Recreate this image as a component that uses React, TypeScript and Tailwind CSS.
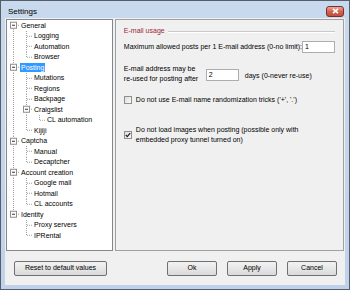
import React from "react";

type Cell = "v" | "e" | "t" | "l" | "bf" | "bm" | "bl";

const rows: { label: string; cells: Cell[]; sel?: boolean }[] = [
  { label: "General", cells: ["bf"] },
  { label: "Logging", cells: ["v", "t"] },
  { label: "Automation", cells: ["v", "t"] },
  { label: "Browser", cells: ["v", "l"] },
  { label: "Posting", cells: ["bm"], sel: true },
  { label: "Mutations", cells: ["v", "t"] },
  { label: "Regions", cells: ["v", "t"] },
  { label: "Backpage", cells: ["v", "t"] },
  { label: "Craigslist", cells: ["v", "bm"] },
  { label: "CL automation", cells: ["v", "v", "l"] },
  { label: "Kijiji", cells: ["v", "l"] },
  { label: "Captcha", cells: ["bm"] },
  { label: "Manual", cells: ["v", "t"] },
  { label: "Decaptcher", cells: ["v", "l"] },
  { label: "Account creation", cells: ["bm"] },
  { label: "Google mail", cells: ["v", "t"] },
  { label: "Hotmail", cells: ["v", "t"] },
  { label: "CL accounts", cells: ["v", "l"] },
  { label: "Identity", cells: ["bl"] },
  { label: "Proxy servers", cells: ["e", "t"] },
  { label: "IPRental", cells: ["e", "l"] },
];

const LC = "#a0a0a0";

function TreeCell({ type }: { type: Cell }) {
  const h = 10.5;
  const cy = 5.25;
  const dash = "1 1";
  return (
    <svg width={13} height={h} viewBox={`0 0 13 ${h}`} className="shrink-0 block">
      {(type === "v" || type === "t" || type === "bm") && (
        <line x1={6.5} y1={0} x2={6.5} y2={h} stroke={LC} strokeDasharray={dash} />
      )}
      {(type === "l" || type === "bl") && (
        <line x1={6.5} y1={0} x2={6.5} y2={cy} stroke={LC} strokeDasharray={dash} />
      )}
      {type === "bf" && (
        <line x1={6.5} y1={cy} x2={6.5} y2={h} stroke={LC} strokeDasharray={dash} />
      )}
      {type !== "v" && type !== "e" && (
        <line x1={7} y1={cy} x2={13} y2={cy} stroke={LC} strokeDasharray={dash} />
      )}
      {(type === "bf" || type === "bm" || type === "bl") && (
        <g>
          <rect x={3.5} y={2.25} width={6} height={6} fill="#fff" stroke="#8e8f8f" />
          <line x1={5} y1={5.25} x2={8} y2={5.25} stroke="#333" />
        </g>
      )}
    </svg>
  );
}

function Checkbox({ checked }: { checked?: boolean }) {
  return (
    <div className="w-[8px] h-[8px] shrink-0 border border-[#8f8f8f] bg-gradient-to-br from-[#dcdcdc] to-[#fbfbfb] flex items-center justify-center">
      {checked && (
        <svg width="6" height="6" viewBox="0 0 6 6">
          <path d="M0.8 3 L2.3 4.6 L5.2 1.2" stroke="#222" strokeWidth="1.3" fill="none" />
        </svg>
      )}
    </div>
  );
}

function Btn({ label, w }: { label: string; w: string }) {
  return (
    <div
      className={`${w} h-[15px] border border-[#707070] rounded-[2px] bg-gradient-to-b from-[#f3f3f3] to-[#dadada] flex items-center justify-center text-[7px] text-black`}
    >
      {label}
    </div>
  );
}

export default function App() {
  return (
    <div
      className="w-[350px] h-[290px] bg-gradient-to-b from-[#c9d9ed] to-[#bfd2ea] border border-[#555e6a] flex flex-col text-black"
      style={{ fontFamily: '"Liberation Sans", Arial, sans-serif' }}
    >
      {/* title bar */}
      <div className="h-[17px] flex items-center justify-between pl-[7px] pr-[5px] shrink-0">
        <span className="text-[8px] leading-none mt-[4px]">Settings</span>
        <div className="w-[18px] h-[11px] mt-[3px] rounded-[3px] border border-[#7a3028] bg-gradient-to-b from-[#e9a99c] via-[#d0624f] to-[#c2503b] flex items-center justify-center">
          <svg width="7" height="6" viewBox="0 0 7 6">
            <path d="M1 0.8 L6 5.2 M6 0.8 L1 5.2" stroke="#fff" strokeWidth="1.6" />
          </svg>
        </div>
      </div>
      {/* client */}
      <div className="flex-1 mx-[4px] mb-[4px] bg-[#f0f0f0] flex flex-col">
        <div className="flex h-[233px] pt-[1px]">
          {/* tree */}
          <div className="w-[109px] ml-[1px] border border-[#828790] bg-white pt-0 flex flex-col">
            {rows.map((r) => (
              <div key={r.label} className="h-[10.5px] flex items-center pl-0">
                {r.cells.map((c, i) => (
                  <TreeCell key={i} type={c} />
                ))}
                <span
                  className={`text-[7px] leading-[9px] px-[1px] whitespace-nowrap ${
                    r.sel ? "bg-[#3399ff] text-white" : ""
                  }`}
                >
                  {r.label}
                </span>
              </div>
            ))}
          </div>
          {/* right panel */}
          <div className="ml-[2px] mr-[1px] flex-1 border border-[#a0a0a0] flex flex-col pl-[8px] pr-[8px] text-[7px] leading-[10px]">
            <div className="flex items-center mt-[6px]">
              <span className="text-[#9c1f34] whitespace-nowrap">E-mail usage</span>
              <div className="flex-1 ml-[3px] mt-[1px] border-t border-[#c8c8c8] border-b border-b-white" />
            </div>
            <div className="flex items-center mt-[5px] justify-between">
              <span className="whitespace-nowrap">Maximum allowed posts per 1 E-mail address (0-no limit):</span>
              <div className="w-[33px] h-[12px] border border-[#abadb3] bg-white pl-[2px] flex items-center">1</div>
            </div>
            <div className="flex items-center mt-[11px]">
              <div className="w-[82px] flex flex-col">
                <span className="whitespace-nowrap">E-mail address may be</span>
                <span className="whitespace-nowrap">re-used for posting after</span>
              </div>
              <div className="w-[33px] h-[12px] border border-[#abadb3] bg-white pl-[2px] flex items-center mt-[1px]">2</div>
              <span className="ml-[6px] mt-[4px] whitespace-nowrap">days (0-never re-use)</span>
            </div>
            <div className="flex items-center mt-[11px]">
              <Checkbox />
              <span className="ml-[4px] whitespace-nowrap">Do not use E-mail name randomization tricks ('+', '.')</span>
            </div>
            <div className="flex items-center mt-[20px]">
              <Checkbox checked />
              <div className="ml-[4px] flex flex-col">
                <span className="whitespace-nowrap">Do not load images when posting (possible only with</span>
                <span className="whitespace-nowrap">embedded proxy tunnel turned on)</span>
              </div>
            </div>
          </div>
        </div>
        {/* buttons */}
        <div className="flex items-center mt-[10px] pl-[9px] pr-[8px]">
          <Btn label="Reset to default values" w="w-[93px]" />
          <div className="flex-1" />
          <div className="flex gap-[10px]">
            <Btn label="Ok" w="w-[50px]" />
            <Btn label="Apply" w="w-[50px]" />
            <Btn label="Cancel" w="w-[50px]" />
          </div>
        </div>
      </div>
    </div>
  );
}
